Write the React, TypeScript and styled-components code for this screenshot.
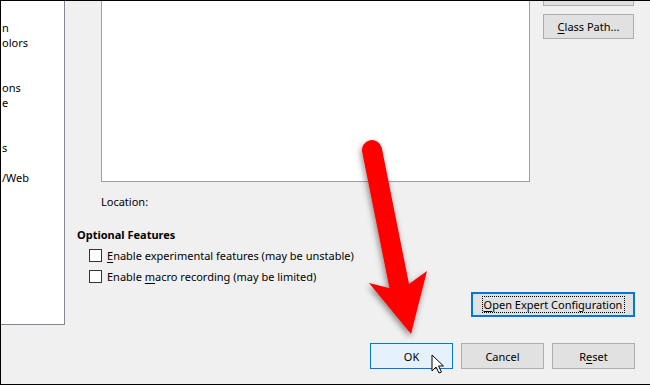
import React from "react";
import styled, { createGlobalStyle } from "styled-components";

const GlobalStyle = createGlobalStyle`
  html, body { margin: 0; padding: 0; background: #f0f0f0; }
  * { box-sizing: border-box; }
`;

// --- Styled Components ---

const Dialog = styled.div`
  position: relative;
  width: 650px;
  height: 385px;
  overflow: hidden;
  background: #f0f0f0;
  border-top: 1px solid #000;
  border-left: 1px solid #000;
  border-bottom: 1px solid #000;
  display: flex;
  flex-direction: column;
  font-family: "Noto Sans", "Open Sans", sans-serif;
  font-size: 11px;
  color: #000;
`;

const Body = styled.div`
  display: flex;
  height: 324px;
`;

const Tree = styled.div`
  width: 64px;
  flex-shrink: 0;
  background: #fff;
  border-right: 1px solid #828790;
  border-bottom: 1px solid #828790;
  padding-top: 19px;
  overflow: hidden;
`;

const TreeRow = styled.div`
  height: 15px;
  line-height: 15px;
  white-space: nowrap;
  padding-left: 1px;
  overflow: hidden;
`;

const Content = styled.div`
  flex: 1;
  display: flex;
  flex-direction: column;
`;

const TopRow = styled.div`
  display: flex;
  align-items: flex-start;
  padding-left: 36px;
  padding-right: 16px;
  gap: 13px;
`;

const ListBox = styled.div`
  width: 429px;
  height: 181px;
  background: #fff;
  border: 1px solid #a0a0a0;
  border-top: none;
`;

const SideButtons = styled.div`
  display: flex;
  flex-direction: column;
  gap: 8px;
`;

const Button = styled.button<{ $w?: number; $h?: number; $default?: boolean }>`
  width: ${(p) => p.$w ?? 83}px;
  height: ${(p) => p.$h ?? 25}px;
  padding: 0;
  font: inherit;
  color: #000;
  background: ${(p) => (p.$default ? "#e5f1fb" : "#e1e1e1")};
  border: 1px solid ${(p) => (p.$default ? "#0078d7" : "#adadad")};
  display: flex;
  align-items: center;
  justify-content: center;
  white-space: nowrap;
`;

const PartialButton = styled(Button)`
  border-top: none;
`;

const FocusedButton = styled(Button)`
  border: 2px solid #0078d7;
`;

const FocusRect = styled.span`
  border: 1px dotted #000;
  width: 143px;
  height: 17px;
  display: flex;
  align-items: center;
  justify-content: center;
`;

const Key = styled.u`
  text-decoration: underline;
  text-underline-offset: 2px;
`;

const Label = styled.div<{ $indent: number; $top: number }>`
  margin-top: ${(p) => p.$top}px;
  padding-left: ${(p) => p.$indent}px;
  height: 16px;
  line-height: 16px;
  white-space: nowrap;
`;

const Heading = styled(Label)`
  font-weight: 700;
`;

const CheckList = styled.div`
  margin-top: 2px;
  padding-left: 24px;
  display: flex;
  flex-direction: column;
`;

const CheckRow = styled.label`
  height: 21px;
  display: flex;
  align-items: center;
  gap: 5px;
  white-space: nowrap;
`;

const Box = styled.span`
  width: 13px;
  height: 13px;
  background: #fff;
  border: 1px solid #333;
  flex-shrink: 0;
`;

const ExpertRow = styled.div`
  margin-top: 5px;
  display: flex;
  justify-content: flex-end;
  padding-right: 15px;
`;

const Footer = styled.div`
  display: flex;
  justify-content: flex-end;
  gap: 8px;
  padding: 18px 15px 0 0;
`;

const Overlay = styled.svg`
  position: absolute;
  left: -1px;
  top: -1px;
  pointer-events: none;
`;

const treeItems = ["n", "olors", "", "", "ons", "e", "", "", "s", "", "/Web"];

// --- MAIN COMPONENT ---
const App: React.FC = () => {
  return (
    <>
      <GlobalStyle />
      <Dialog>
        <Body>
          <Tree>
            {treeItems.map((t, i) => (
              <TreeRow key={i}>{t}</TreeRow>
            ))}
          </Tree>

          <Content>
            <TopRow>
              <ListBox />
              <SideButtons>
                <PartialButton $w={91} $h={5} />
                <Button $w={91}>
                  <Key>C</Key>lass Path...
                </Button>
              </SideButtons>
            </TopRow>

            <Label $indent={36} $top={12}>Location:</Label>
            <Heading $indent={12} $top={17}>Optional Features</Heading>

            <CheckList>
              <CheckRow>
                <Box />
                <span>
                  <Key>E</Key>nable experimental features (may be unstable)
                </span>
              </CheckRow>
              <CheckRow>
                <Box />
                <span>
                  Enable <Key>m</Key>acro recording (may be limited)
                </span>
              </CheckRow>
            </CheckList>

            <ExpertRow>
              <FocusedButton $w={164}>
                <FocusRect>
                  <Key>O</Key>pen Expert Configuration
                </FocusRect>
              </FocusedButton>
            </ExpertRow>
          </Content>
        </Body>

        <Footer>
          <Button $h={26} $default>OK</Button>
          <Button $h={26}>Cancel</Button>
          <Button $h={26}>
            R<Key>e</Key>set
          </Button>
        </Footer>

        <Overlay width={650} height={385} viewBox="0 0 650 385">
          <defs>
            <filter id="shadow" x="-30%" y="-30%" width="160%" height="160%">
              <feDropShadow dx="-1" dy="3" stdDeviation="3" floodColor="#000" floodOpacity="0.45" />
            </filter>
          </defs>
          <g filter="url(#shadow)" fill="#ff0000" stroke="none">
            <line x1="372" y1="150" x2="400" y2="290" stroke="#ff0000" strokeWidth="20" strokeLinecap="round" />
            <polygon points="389,288 369,283 411,334 427,271 409,284" />
          </g>
          <path
            d="M432 355 L432 371 L436 367 L439 373 L441.5 372 L438.5 366 L443.5 366 Z"
            fill="#fff"
            stroke="#000"
            strokeWidth="1"
            strokeLinejoin="miter"
          />
        </Overlay>
      </Dialog>
    </>
  );
};

export default App;
